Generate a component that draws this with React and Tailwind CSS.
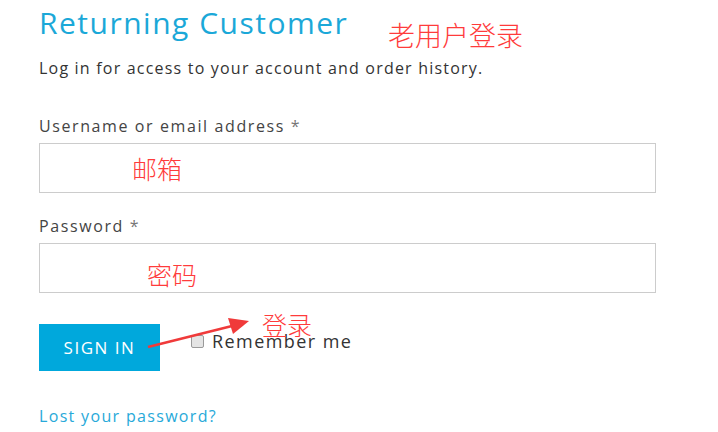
import React from "react";

export default function App() {
  return (
    <div className="relative w-[718px] h-[432px] bg-white overflow-hidden font-['Open_Sans','Noto_Sans',sans-serif]">
      <div className="pl-[39px] pr-[62px] pt-[4px]">
        <h2 className="text-[30px] leading-[38px] text-[#1ba8d8] font-normal tracking-[0.05em]">Returning Customer</h2>
        <p className="mt-[15px] text-[16px] leading-[22px] text-[#333] tracking-[0.075em]">
          Log in for access to your account and order history.
        </p>

        <form className="mt-[36px]">
          <label className="block text-[16px] leading-[22px] text-[#444] tracking-[0.1em]">
            Username or email address <span className="text-[#777]">*</span>
          </label>
          <input type="text" className="mt-[6px] block w-full h-[50px] border border-[#ccc] outline-none" />

          <label className="block mt-[22px] text-[16px] leading-[22px] text-[#444] tracking-[0.1em]">
            Password <span className="text-[#777]">*</span>
          </label>
          <input type="password" className="mt-[6px] block w-full h-[50px] border border-[#ccc] outline-none" />

          <div className="mt-[31px] flex items-center">
            <button
              type="button"
              className="w-[121px] h-[47px] bg-[#00a8dc] text-white text-[17px] font-medium tracking-[0.09em]"
            >
              SIGN IN
            </button>
            <label className="ml-[31px] -mt-[12px] flex items-center gap-[8px] text-[18px] text-[#333] tracking-[0.08em]">
              <span className="w-[13px] h-[13px] rounded-[2px] border border-[#9a9a9a] bg-[#e4e4e4]" />
              Remember me
            </label>
          </div>

          <a href="#" className="block mt-[34px] text-[16px] leading-[22px] text-[#27a9d9] tracking-[0.083em]">
            Lost your password?
          </a>
        </form>
      </div>

      {/* annotations */}
      <span className="absolute left-[388px] top-[18px] text-[27px] leading-[34px] font-light text-[#ff3b3b] font-['Noto_Sans_CJK_SC',sans-serif]">老用户登录</span>
      <span className="absolute left-[132px] top-[151px] text-[25px] leading-[34px] font-light text-[#ff3b3b] font-['Noto_Sans_CJK_SC',sans-serif]">邮箱</span>
      <span className="absolute left-[147px] top-[257px] text-[25px] leading-[34px] font-light text-[#ff3b3b] font-['Noto_Sans_CJK_SC',sans-serif]">密码</span>
      <span className="absolute left-[262px] top-[307px] text-[25px] leading-[34px] font-light text-[#ff3b3b] font-['Noto_Sans_CJK_SC',sans-serif]">登录</span>
      <svg className="absolute left-0 top-0" width="718" height="432">
        <line x1="148" y1="347" x2="232" y2="326" stroke="#f03a3a" strokeWidth="2.5" />
        <polygon points="249,321 228,318 233,334" fill="#f03a3a" />
      </svg>
    </div>
  );
}
